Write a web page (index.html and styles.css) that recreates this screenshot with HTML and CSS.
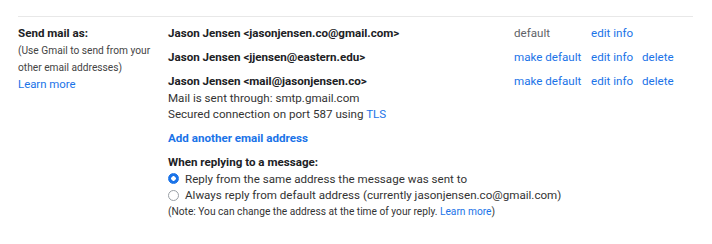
FILE: index.html
```html
<!DOCTYPE html>
<html lang="en">
<head>
  <meta charset="UTF-8" />
  <title>Accounts - Send mail as</title>
  <link rel="stylesheet" href="styles.css">
</head>
<body>

  <div class="settings-row">
    <div class="label-col">
      <div class="label-title">Send mail as:</div>
      <div class="label-hint">(Use Gmail to send from your other email addresses)</div>
      <a class="link" href="#">Learn more</a>
    </div>

    <div class="content-col">
      <div class="account">
        <div class="address">
          <div class="name">Jason Jensen &lt;jasonjensen.co@gmail.com&gt;</div>
        </div>
        <div class="actions">
          <span class="act-default muted">default</span>
          <a class="act-edit link" href="#">edit info</a>
          <span class="act-delete"></span>
        </div>
      </div>

      <div class="account">
        <div class="address">
          <div class="name">Jason Jensen &lt;jjensen@eastern.edu&gt;</div>
        </div>
        <div class="actions">
          <a class="act-default link" href="#">make default</a>
          <a class="act-edit link" href="#">edit info</a>
          <a class="act-delete link" href="#">delete</a>
        </div>
      </div>

      <div class="account">
        <div class="address">
          <div class="name">Jason Jensen &lt;mail@jasonjensen.co&gt;</div>
          <div>Mail is sent through: smtp.gmail.com</div>
          <div>Secured connection on port 587 using <a class="link" href="#">TLS</a></div>
        </div>
        <div class="actions">
          <a class="act-default link" href="#">make default</a>
          <a class="act-edit link" href="#">edit info</a>
          <a class="act-delete link" href="#">delete</a>
        </div>
      </div>

      <a class="add-link" href="#">Add another email address</a>

      <div class="reply-block">
        <div class="name">When replying to a message:</div>
        <label class="radio-row">
          <span class="radio checked"></span>
          Reply from the same address the message was sent to
        </label>
        <label class="radio-row">
          <span class="radio"></span>
          Always reply from default address (currently jasonjensen.co@gmail.com)
        </label>
        <div class="note">(Note: You can change the address at the time of your reply. <a class="link" href="#">Learn more</a>)</div>
      </div>
    </div>
  </div>

</body>
</html>
```

FILE: styles.css
```css
body {
  margin: 0;
  background: #ffffff;
  color: #222222;
  font-family: Roboto, Arial, sans-serif;
  font-size: 11.6px;
  line-height: 16.5px;
}

a {
  text-decoration: none;
}

.link {
  color: #1a73e8;
}

.muted {
  color: #5f6368;
}

.settings-row {
  display: flex;
  margin: 16px 19px 0 18px;
  padding-top: 8px;
  border-top: 1px solid #e8e8e8;
}

.label-col {
  width: 150px;
  flex-shrink: 0;
  font-size: 10.2px;
  line-height: 17px;
}

.label-title {
  font-size: 11.6px;
  font-weight: bold;
  line-height: 16.5px;
  color: #202124;
}

.label-hint {
  color: #444;
  padding-right: 4px;
}

.label-col .link {
  font-size: 11.4px;
}

.content-col {
  flex: 1;
}

.account {
  display: flex;
  margin-bottom: 7.5px;
}

.address {
  flex: 1;
  color: #333;
}

.name {
  font-weight: bold;
  color: #202124;
}

.actions {
  display: flex;
  width: 179px;
}

.act-default {
  width: 77px;
}

.act-edit {
  width: 51px;
}

.add-link {
  display: block;
  color: #1a73e8;
  font-weight: bold;
  margin-bottom: 7.5px;
}

.radio-row {
  display: flex;
  align-items: center;
  gap: 6px;
  height: 16.5px;
  color: #333;
}

.radio {
  width: 9px;
  height: 9px;
  border: 1px solid #9aa0a6;
  border-radius: 50%;
  box-sizing: content-box;
  background: #fff;
}

.radio.checked {
  border-color: #1a73e8;
  background: radial-gradient(circle, #fff 0 2px, #1a73e8 2.5px);
}

.note {
  font-size: 10.2px;
  color: #333;
}
```
